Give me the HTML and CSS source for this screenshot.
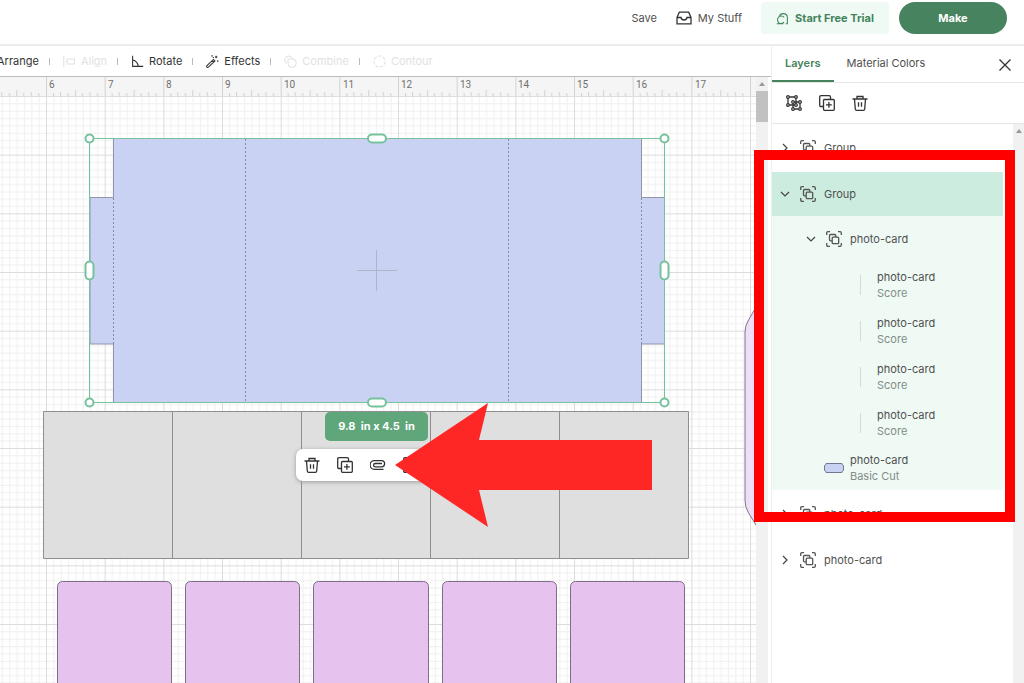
FILE: index.html
```
<!DOCTYPE html>
<html lang="en">
<head>
    <meta charset="UTF-8">
    <meta name="viewport" content="width=device-width, initial-scale=1.0">
    <title>Design Canvas</title>
    <link rel="stylesheet" href="styles.css">
</head>
<body>
    <!-- shared icons -->
    <svg class="sprite" aria-hidden="true">
        <symbol id="trash" viewBox="0 0 16 16"><path d="M.5 4h15M5 4V1.5h6V4M2.5 4l.8 10q.1 1.3 1.3 1.3h6.8q1.2 0 1.3-1.3l.8-10M6.5 7.2v4.6M9.5 7.2v4.6"/></symbol>
        <symbol id="duplicate" viewBox="0 0 16 16"><path d="M4.5 11.5H2q-1.3 0-1.3-1.3V2Q.7.7 2 .7h8.200q1.3 0 1.3 1.3v2.5"/><rect x="4.5" y="4.5" width="10.8" height="10.8" rx="1"/><path d="M9.9 7v5.8M7 9.9h5.8"/></symbol>
        <symbol id="group" viewBox="0 0 16 16"><path d="M.7 4V2Q.7.7 2 .7h2M12 .7h2q1.3 0 1.3 1.3v2M15.3 12v2q0 1.3-1.3 1.3h-2M4 15.3H2Q.7 15.3.7 14v-2"/><path d="M6 9.800H4.5q-1 0-1-1V4.5q0-1 1-1h4.3q1 0 1 1V6"/><rect x="6.2" y="6.2" width="6.5" height="6.5" rx="1"/></symbol>
        <symbol id="ungroup" viewBox="0 0 16 16"><path d="M3.2 2h5.6M2 3.200v5.600M3.200 10h5.600M10 3.200v5.600M8.200 7h4.600M8.200 14h4.600M7 8.200v4.600M14 8.200v4.600"/><circle cx="2" cy="2" r="1.300"/><circle cx="10" cy="2" r="1.300"/><circle cx="2" cy="10" r="1.300"/><circle cx="10" cy="10" r="1.300"/><circle cx="7" cy="7" r="1.300"/><circle cx="14" cy="7" r="1.300"/><circle cx="7" cy="14" r="1.300"/><circle cx="14" cy="14" r="1.300"/></symbol>
        <symbol id="clip" viewBox="0 0 16 16"><path d="M13.500 12.300H4.400a3.900 3.900 0 0 1 0-8.600h7.800a3.200 3.200 0 0 1 0 6.200H5.300a1.700 1.700 0 0 1 0-3.400H12"/></symbol>
        <symbol id="right" viewBox="0 0 10 10"><path d="M3 1l4 4-4 4"/></symbol>
        <symbol id="down" viewBox="0 0 10 10"><path d="M1 3l4 4 4-4"/></symbol>
        <symbol id="close" viewBox="0 0 16 16"><path d="M2.500 2.500l11 11M13.500 2.500l-11 11"/></symbol>
        <symbol id="tray" viewBox="0 0 16 16"><path d="M1 7.500L3.300 2.200h9.400L15 7.500v6.300H1zM1 7.500h4q.5 2.500 3 2.500t3-2.500h4"/></symbol>
        <symbol id="cricut" viewBox="0 0 16 16"><path d="M10 12.500a4.600 4.600 0 1 1 0-5.800M1 14.500h8M4 4.500Q5.500 2 9 2q5 0 5 5v7.500h-2"/></symbol>
        <symbol id="align" viewBox="0 0 16 16"><path d="M1 1v14M3 8h2M5 5h9v6H5z"/></symbol>
        <symbol id="rotate" viewBox="0 0 16 16"><path d="M2 1v13h13M2 6q6 1.500 7 8"/></symbol>
        <symbol id="effects" viewBox="0 0 16 16"><path d="M1.200 13.200l8-7.700 1.800 1.800-8 7.700q-1 .7-1.800-.1t0-1.700zM7.500 7.200L9.300 9"/><path d="M12.500 1v3M11 2.500h3M7.500 0v2M14.500 6.500v2M8.500 2.500l1 1"/></symbol>
        <symbol id="combine" viewBox="0 0 16 16"><path d="M3 10.500a5 5 0 1 1 7.500-6"/><path d="M5 5h6q3.500.5 4 4.500 0 5-5 5.500-5-.5-5-5z"/></symbol>
        <symbol id="contour" viewBox="0 0 16 16"><circle cx="8" cy="8" r="6.800" stroke-dasharray="4 1.900"/></symbol>
    </svg>

    <header class="header">
        <button type="button" class="link">Save</button>
        <button type="button" class="link"><svg class="icon"><use href="#tray"/></svg>My Stuff</button>
        <button type="button" class="trial"><svg class="icon small"><use href="#cricut"/></svg>Start Free Trial</button>
        <button type="button" class="make">Make</button>
    </header>

    <main class="main">
        <section class="editor">
            <div class="toolbar">
                <button type="button">Arrange</button>
                <button type="button" disabled><svg class="icon small"><use href="#align"/></svg>Align</button>
                <button type="button"><svg class="icon small"><use href="#rotate"/></svg>Rotate</button>
                <button type="button"><svg class="icon small"><use href="#effects"/></svg>Effects</button>
                <button type="button" disabled><svg class="icon small"><use href="#combine"/></svg>Combine</button>
                <button type="button" disabled><svg class="icon small"><use href="#contour"/></svg>Contour</button>
            </div>
            <div class="workspace">
                <div class="canvas">
                    <svg class="ruler">
                        <defs>
                            <pattern id="ticks" x="46" y="0" width="58.67" height="20" patternUnits="userSpaceOnUse">
                                <path class="tick" d="M7.5 16v4M14.5 15v5M22 16v4M29.5 13v7M36.5 16v4M44 15v5M51.5 16v4"/>
                                <path class="inch" d="M.5 0v20"/>
                            </pattern>
                        </defs>
                        <rect width="100%" height="20" fill="url(#ticks)"/>
                        <text x="49" y="11">6</text>
                        <text x="108" y="11">7</text>
                        <text x="166" y="11">8</text>
                        <text x="225" y="11">9</text>
                        <text x="284" y="11">10</text>
                        <text x="343" y="11">11</text>
                        <text x="401" y="11">12</text>
                        <text x="460" y="11">13</text>
                        <text x="518" y="11">14</text>
                        <text x="577" y="11">15</text>
                        <text x="636" y="11">16</text>
                        <text x="695" y="11">17</text>
                    </svg>
                    <svg class="board">
                        <defs>
                            <pattern id="grid" x="46" y="-1" width="58.67" height="58.67" patternUnits="userSpaceOnUse">
                                <path class="minor" d="M7.8 0v59M15.2 0v59M22.5 0v59M29.8 0v59M37.2 0v59M44.5 0v59M51.8 0v59M0 7.8h59M0 15.2h59M0 22.5h59M0 29.8h59M0 37.2h59M0 44.5h59M0 51.8h59"/>
                                <path class="major" d="M.5 0v59M0 .5h59"/>
                            </pattern>
                        </defs>
                        <rect width="100%" height="100%" fill="url(#grid)"/>
                        <!-- lilac piece running off the right edge -->
                        <path class="lilac" d="M764 196L748 224Q745 229 745 235V403Q745 410 748 415L764 441z"/>
                        <!-- box template -->
                        <path class="box" d="M113.5 41.5h528v59h23v146.500h-23v58.500h-528v-58.500H90V100.500h23.500z"/>
                        <path class="score" d="M113.5 101v146M245.5 42v263M508.5 42v263M641.5 101v146"/>
                        <path class="cross" d="M357 173.5h40M376.5 153v41"/>
                        <!-- grey strip -->
                        <path class="strip" d="M43.5 314.5h645v147h-645zM172.5 314.5v147M301.5 314.5v147M430.5 314.5v147M559.5 314.5v147"/>
                        <!-- photo cards -->
                        <g class="cards">
                            <rect x="57.5" y="484.5" width="114" height="160" rx="5"/>
                            <rect x="185.5" y="484.5" width="114" height="160" rx="5"/>
                            <rect x="313.5" y="484.5" width="115" height="160" rx="5"/>
                            <rect x="442.5" y="484.5" width="114" height="160" rx="5"/>
                            <rect x="570.5" y="484.5" width="114" height="160" rx="5"/>
                        </g>
                        <!-- selection -->
                        <g class="selection">
                            <path d="M89.5 41.5h575v264h-575z" fill="none" stroke-width="1"/>
                            <circle cx="89.5" cy="41.5" r="4"/>
                            <circle cx="664.5" cy="41.5" r="4"/>
                            <circle cx="89.5" cy="305.5" r="4"/>
                            <circle cx="664.5" cy="305.5" r="4"/>
                            <rect x="368" y="37.5" width="18" height="8" rx="4"/>
                            <rect x="368" y="301.5" width="18" height="8" rx="4"/>
                            <rect x="85.5" y="164.5" width="8" height="18" rx="4"/>
                            <rect x="660.5" y="164.5" width="8" height="18" rx="4"/>
                        </g>
                    </svg>
                    <div class="size">9.8&nbsp; in x 4.5&nbsp; in</div>
                    <div class="actions">
                        <button type="button" aria-label="Delete"><svg class="icon"><use href="#trash"/></svg></button>
                        <button type="button" aria-label="Duplicate"><svg class="icon"><use href="#duplicate"/></svg></button>
                        <button type="button" aria-label="Attach"><svg class="icon"><use href="#clip"/></svg></button>
                        <button type="button" aria-label="Group"><svg class="icon"><use href="#group"/></svg></button>
                    </div>
                    <svg class="arrow" viewBox="0 0 258 124"><path d="M0 62L93 0l-9 37h173v50H84l9 37z"/></svg>
                </div>
                <div class="scrollbar"><span class="up"></span><span class="thumb"></span></div>
            </div>
        </section>

        <aside class="panel">
            <div class="tabs">
                <button type="button" class="tab active">Layers</button>
                <button type="button" class="tab">Material Colors</button>
                <button type="button" class="close" aria-label="Close"><svg class="icon"><use href="#close"/></svg></button>
            </div>
            <div class="tools">
                <button type="button" aria-label="Ungroup"><svg class="icon"><use href="#ungroup"/></svg></button>
                <button type="button" aria-label="Duplicate"><svg class="icon"><use href="#duplicate"/></svg></button>
                <button type="button" aria-label="Delete"><svg class="icon"><use href="#trash"/></svg></button>
            </div>
            <div class="list">
                <div class="layers">
                    <div class="row"><svg class="chevron"><use href="#right"/></svg><svg class="icon"><use href="#group"/></svg>Group</div>
                    <div class="selected">
                        <div class="row head"><svg class="chevron"><use href="#down"/></svg><svg class="icon"><use href="#group"/></svg>Group</div>
                        <div class="row nested"><svg class="chevron"><use href="#down"/></svg><svg class="icon"><use href="#group"/></svg>photo-card</div>
                        <div class="row item"><span class="line"></span><div>photo-card<small>Score</small></div></div>
                        <div class="row item"><span class="line"></span><div>photo-card<small>Score</small></div></div>
                        <div class="row item"><span class="line"></span><div>photo-card<small>Score</small></div></div>
                        <div class="row item"><span class="line"></span><div>photo-card<small>Score</small></div></div>
                        <div class="row cut"><svg class="swatch" viewBox="0 0 20 10"><path d="M2 .5h16v1l1.5 1v5l-1.5 1v1H2v-1L.5 7.500v-5l1.5-1z"/></svg><div>photo-card<small>Basic Cut</small></div></div>
                    </div>
                    <div class="row"><svg class="chevron"><use href="#right"/></svg><svg class="icon"><use href="#group"/></svg>photo-card</div>
                    <div class="row"><svg class="chevron"><use href="#right"/></svg><svg class="icon"><use href="#group"/></svg>photo-card</div>
                </div>
                <div class="scrollbar"><span class="up"></span></div>
            </div>
            <div class="highlight"></div>
        </aside>
    </main>
</body>
</html>
```
FILE: styles.css
```
* {
    box-sizing: border-box;
}
body {
    margin: 0;
    height: 100vh;
    display: flex;
    flex-direction: column;
    overflow: hidden;
    background: #fff;
    color: #505050;
    font: 11px/16px Inter, "Liberation Sans", sans-serif;
}
button {
    display: flex;
    align-items: center;
    justify-content: center;
    padding: 0;
    border: none;
    background: none;
    color: inherit;
    font: inherit;
    white-space: nowrap;
    cursor: pointer;
}
.sprite {
    display: none;
}
.icon {
    flex: none;
    width: 16px;
    height: 16px;
    fill: none;
    stroke: #333;
    stroke-width: 1.3;
}
.small {
    width: 13px;
    height: 13px;
}

/* Header */
.header {
    display: flex;
    justify-content: flex-end;
    flex: none;
    height: 46px;
    padding: 2px 17px 10px;
    border-bottom: 2px solid #ececec;
}
.link {
    gap: 6px;
    margin-right: 19px;
}
.trial {
    gap: 6px;
    width: 128px;
    margin-right: 10px;
    border-radius: 4px;
    background: #effaf5;
    color: #44835c;
    font-weight: 700;
}
.trial .icon {
    stroke: #44835c;
}
.make {
    width: 108px;
    border-radius: 16px;
    background: #47835f;
    color: #fff;
    font-weight: 700;
}

/* Editor */
.main {
    display: flex;
    flex: 1;
    min-height: 0;
}
.editor {
    display: flex;
    flex-direction: column;
    flex: 1;
    min-width: 0;
}
.toolbar {
    display: flex;
    align-items: center;
    height: 30px;
    margin-left: -3px;
    color: #333;
}
.toolbar button {
    gap: 5px;
}
.toolbar button + button::before {
    content: "";
    width: 1px;
    height: 7px;
    margin: 0 8px 0 10px;
    background: #bbb;
}
.toolbar button:disabled {
    color: #e2e2e2;
}
.toolbar button:disabled .icon {
    stroke: #e2e2e2;
}
.workspace {
    display: flex;
    flex: 1;
    min-height: 0;
    border-top: 1px solid #bbb;
}
.canvas {
    position: relative;
    display: flex;
    flex-direction: column;
    flex: 1;
    min-width: 0;
    overflow: hidden;
}
.ruler {
    flex: none;
    width: 100%;
    height: 20px;
    border-bottom: 1px solid #ddd;
    background: #f5f5f5;
    fill: #707070;
    font-size: 10px;
    font-family: Roboto, sans-serif;
}
.tick {
    stroke: #d0d0d0;
}
.inch {
    stroke: #d2d2d2;
}
.board {
    flex: 1;
    width: 100%;
    min-height: 0;
}
.minor {
    stroke: #f0f0f0;
}
.major {
    stroke: #dcdcdc;
}
.lilac {
    fill: #efdff6;
    stroke: #807588;
}
.box {
    fill: #cad2f3;
    stroke: #9095ab;
}
.score {
    stroke: #858aa5;
    stroke-dasharray: 2 2;
}
.cross {
    stroke: #b0b4c8;
}
.strip {
    fill: #dfdfdf;
    stroke: #8f8f8f;
}
.cards {
    fill: #e6c3ef;
    stroke: #806d88;
}
.selection {
    fill: #fff;
    stroke: #76c29d;
    stroke-width: 2;
}
.size {
    position: absolute;
    left: 325px;
    top: 335px;
    width: 103px;
    border-radius: 5px;
    background: #5fa67a;
    color: #fff;
    font-weight: 700;
    line-height: 29px;
    text-align: center;
}
.actions {
    position: absolute;
    left: 296px;
    top: 372px;
    display: flex;
    gap: 17px;
    padding: 8px;
    border-radius: 7px;
    background: #fff;
    box-shadow: 0 1px 4px #999;
}
.arrow {
    position: absolute;
    left: 395px;
    top: 326px;
    width: 258px;
    height: 124px;
    fill: #ff2626;
}
.scrollbar {
    display: flex;
    flex-direction: column;
    align-items: center;
    flex: none;
    width: 12px;
    background: #f1f1f1;
}
.up {
    margin: 5px 0;
    border: 3px solid transparent;
    border-top: none;
    border-bottom: 4px solid #999;
}
.thumb {
    width: 12px;
    height: 31px;
    background: #c1c1c1;
}
.workspace .scrollbar {
    margin-right: 3px;
}

/* Layers panel */
.panel {
    position: relative;
    display: flex;
    flex-direction: column;
    flex: none;
    width: 253px;
    border-left: 1px solid #eee;
}
.tabs {
    display: flex;
    height: 37px;
    border-bottom: 1px solid #e6e6e6;
}
.tab {
    padding: 0 13px;
    border-bottom: 2px solid transparent;
}
.tab.active {
    border-color: #44835c;
    color: #44835c;
    font-weight: 600;
}
.close {
    margin: 2px 11px 0 auto;
}
.tools {
    display: flex;
    gap: 17px;
    height: 41px;
    padding-left: 14px;
    border-bottom: 1px solid #e6e6e6;
}
.list {
    display: flex;
    flex: 1;
    min-height: 0;
}
.list .scrollbar {
    width: 11px;
}
.layers {
    display: flex;
    flex-direction: column;
    gap: 2px;
    flex: 1;
    padding: 2px 0;
}
.row {
    display: flex;
    align-items: center;
    gap: 8px;
    height: 44px;
    padding-left: 8px;
}
.row .icon {
    stroke: #555;
}
.chevron {
    width: 10px;
    height: 10px;
    margin-right: 2px;
    fill: none;
    stroke: #444;
    stroke-width: 1.2;
}
.selected {
    margin-right: 10px;
    background: #effaf5;
}
.head {
    background: #cbecdf;
}
.nested {
    height: 46px;
    padding-left: 34px;
}
.item {
    height: 46px;
    gap: 16px;
    padding-left: 88px;
}
.line {
    width: 1px;
    height: 20px;
    background: #d5dcd8;
}
.row small {
    display: block;
    color: #848c88;
    font-size: 11px;
}
.cut {
    gap: 6px;
    padding-left: 52px;
}
.swatch {
    width: 20px;
    height: 10px;
    fill: #cad2f3;
    stroke: #73788f;
}

/* Red frame round the selected layers */
.highlight {
    position: absolute;
    left: -18px;
    right: 9px;
    top: 104px;
    height: 372px;
    border: 10px solid #f00;
}
```
